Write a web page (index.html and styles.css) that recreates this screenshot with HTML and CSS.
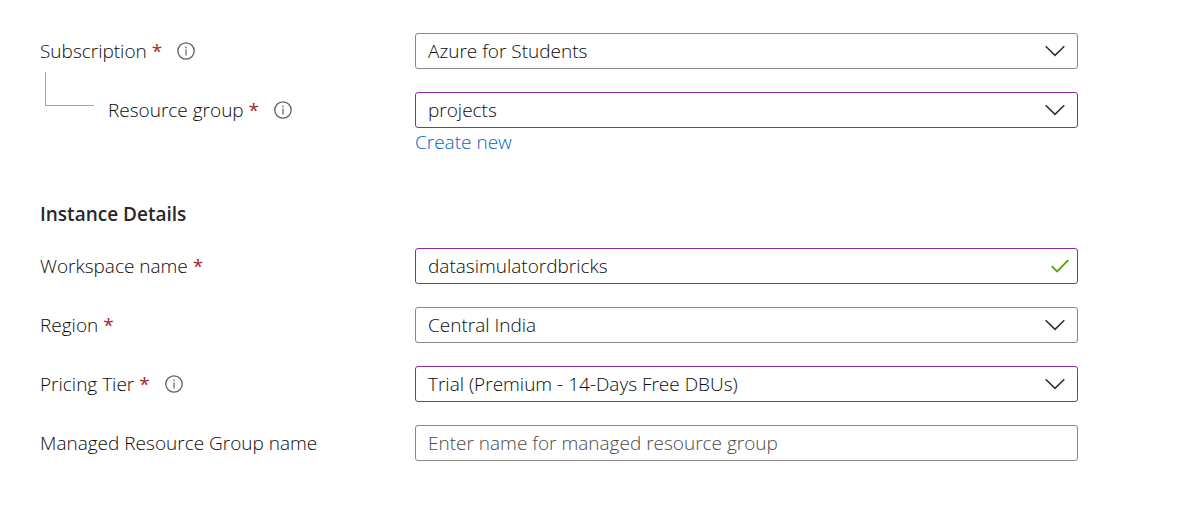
FILE: index.html
```html
<!DOCTYPE html>
<html lang="en">
<head>
<meta charset="utf-8">
<title>Create workspace</title>
<link rel="stylesheet" href="styles.css">
</head>
<body>
<svg class="sprite" aria-hidden="true">
  <symbol id="info" viewBox="0 0 18 18"><circle cx="9" cy="9" r="8.2" fill="none" stroke="currentColor" stroke-width="1.3"/><path d="M9 7.5v6M9 4.6v1.6" fill="none" stroke="currentColor" stroke-width="1.2"/></symbol>
  <symbol id="chevron" viewBox="0 0 20 12"><path d="M.7 1.2 10 10.3l9.3-9.1" fill="none" stroke="currentColor" stroke-width="1.6"/></symbol>
  <symbol id="check" viewBox="0 0 18 14"><path d="M.7 7.2l5.4 5.3L17.3 1.2" fill="none" stroke="currentColor" stroke-width="1.8"/></symbol>
</svg>
<form class="form">
  <div class="row">
    <div class="caption"><label for="subscription">Subscription <span class="required">*</span></label><button class="info" type="button" aria-label="About subscription"><svg><use href="#info"/></svg></button></div>
    <div class="field"><select class="control" id="subscription"><option>Azure for Students</option></select><svg class="chevron"><use href="#chevron"/></svg></div>
  </div>
  <div class="row">
    <div class="caption"><span class="branch"></span><label for="group">Resource group <span class="required">*</span></label><button class="info" type="button" aria-label="About resource group"><svg><use href="#info"/></svg></button></div>
    <div class="field"><select class="control edited" id="group"><option>projects</option></select><svg class="chevron"><use href="#chevron"/></svg></div>
    <a class="create" href="#">Create new</a>
  </div>
  <h2 class="heading">Instance Details</h2>
  <div class="row">
    <div class="caption"><label for="workspace">Workspace name <span class="required">*</span></label></div>
    <div class="field"><input class="control edited" id="workspace" type="text" value="datasimulatordbricks" spellcheck="false"><svg class="check"><use href="#check"/></svg></div>
  </div>
  <div class="row">
    <div class="caption"><label for="region">Region <span class="required">*</span></label></div>
    <div class="field"><select class="control" id="region"><option>Central India</option></select><svg class="chevron"><use href="#chevron"/></svg></div>
  </div>
  <div class="row">
    <div class="caption"><label for="tier">Pricing Tier <span class="required">*</span></label><button class="info" type="button" aria-label="About pricing tier"><svg><use href="#info"/></svg></button></div>
    <div class="field"><select class="control edited" id="tier"><option>Trial (Premium - 14-Days Free DBUs)</option></select><svg class="chevron"><use href="#chevron"/></svg></div>
  </div>
  <div class="row">
    <div class="caption"><label for="managed">Managed Resource Group name</label></div>
    <div class="field"><input class="control" id="managed" type="text" placeholder="Enter name for managed resource group"></div>
  </div>
</form>
</body>
</html>
```
FILE: styles.css
```css
* { box-sizing: border-box; }
body {
  margin: 0;
  background: #fff;
  color: #0c0b0a;
  font: 355 19px/26px "Open Sans", "Noto Sans", sans-serif;
}
.sprite { display: none; }
.form {
  display: flex;
  flex-direction: column;
  gap: 23px;
  padding: 33px 104px 40px 40px;
}
.row {
  display: grid;
  grid-template-columns: 375px minmax(0, 1fr);
}
.caption {
  display: flex;
  align-items: center;
  height: 36px;
  white-space: nowrap;
}
.required { color: #a4262c; font-weight: 500; }
.info {
  width: 18px;
  height: 18px;
  margin-left: 15px;
  padding: 0;
  border: 0;
  background: none;
  color: #605e5c;
}
.info svg { display: block; width: 18px; height: 18px; }
.branch {
  align-self: flex-start;
  width: 49px;
  height: 34px;
  margin: -20px 14px 0 5px;
  border: solid #a6a5a4;
  border-width: 0 0 1px 1px;
}
.field { display: grid; align-items: center; }
.field > * { grid-area: 1 / 1; }
.control {
  width: 100%;
  height: 36px;
  margin: 0;
  padding: 0 48px 0 12px;
  border: 1px solid #8a8886;
  border-radius: 3px;
  background: #fff;
  color: inherit;
  font: inherit;
  appearance: none;
  outline-color: #0078d4;
}
.control::placeholder { color: #4c4a48; opacity: 1; }
.edited { border-color: #8a2da5; }
.chevron, .check { justify-self: end; pointer-events: none; }
.chevron { width: 20px; height: 12px; margin-right: 13px; color: #323130; }
.check { width: 18px; height: 14px; margin-right: 9px; color: #57a300; }
.create {
  grid-column: 2;
  justify-self: start;
  margin-top: 1px;
  color: #0068c4;
  text-decoration: none;
}
.heading {
  margin: 23px 0 -2px;
  color: #292827;
  font-size: 19px;
  font-weight: 600;
}
```
